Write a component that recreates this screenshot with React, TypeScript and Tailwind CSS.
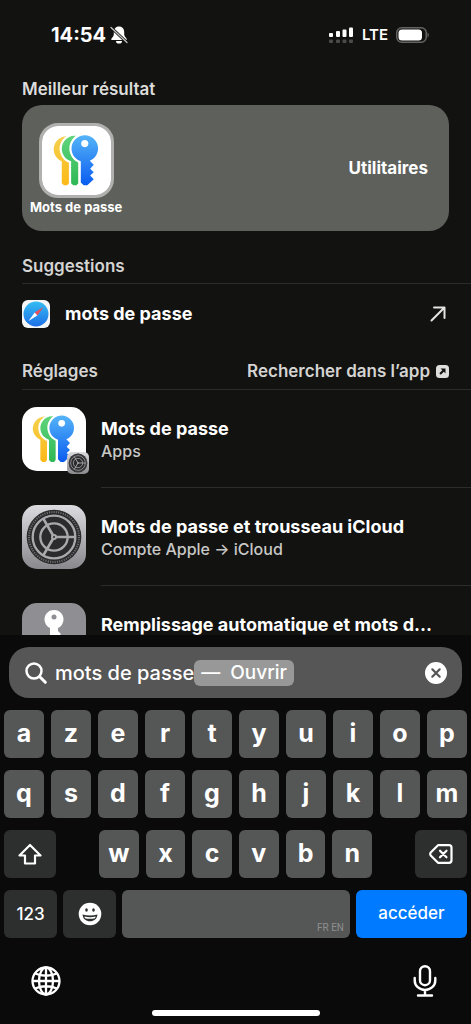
import { useId, useState } from "react";
import type { ReactNode } from "react";

const ROW_ONE = ["a", "z", "e", "r", "t", "y", "u", "i", "o", "p"];
const ROW_TWO = ["q", "s", "d", "f", "g", "h", "j", "k", "l", "m"];
const ROW_THREE = ["w", "x", "c", "v", "b", "n"];

function PasswordsIcon({ className }: { className: string }) {
  const id = useId();
  return (
    <svg viewBox="0 0 192 192" className={className} aria-hidden="true">
      <defs>
        <linearGradient id={`${id}y`} x1="0" y1="0" x2="0" y2="1">
          <stop offset="0" stopColor="#f5d04e" />
          <stop offset="1" stopColor="#fbb917" />
        </linearGradient>
        <linearGradient id={`${id}g`} x1="0" y1="0" x2="0" y2="1">
          <stop offset="0" stopColor="#5fd47c" />
          <stop offset="1" stopColor="#2fb855" />
        </linearGradient>
        <linearGradient id={`${id}b`} x1="0" y1="0" x2="0" y2="1">
          <stop offset="0" stopColor="#55b4f8" />
          <stop offset="1" stopColor="#0a5cf0" />
        </linearGradient>
      </defs>
      <rect width="192" height="192" fill="#fff" />
      <path
        d="M55 98A36 36 0 1 1 75 100V159L70 165H61L55 159Z"
        fill={`url(#${id}y)`}
      />
      <path
        d="M81 98A36 36 0 1 1 101 98V159L96 165H87L81 159Z"
        fill={`url(#${id}g)`}
        stroke="#fff"
        strokeWidth="12"
        paintOrder="stroke"
      />
      <path
        d="M108 98A37 37 0 1 1 133 97L144 108L134 119L144 129L134 138L144 148L126 165H116L108 157Z"
        fill={`url(#${id}b)`}
        stroke="#fff"
        strokeWidth="12"
        paintOrder="stroke"
      />
      <circle cx="119" cy="49" r="10" fill="#fff" />
    </svg>
  );
}

function SettingsIcon({ className }: { className: string }) {
  const id = useId();
  return (
    <svg viewBox="0 0 192 192" className={className} aria-hidden="true">
      <defs>
        <linearGradient id={id} x1="0" y1="0" x2="0" y2="1">
          <stop offset="0" stopColor="#dcdce0" />
          <stop offset="1" stopColor="#89898d" />
        </linearGradient>
      </defs>
      <rect width="192" height="192" fill={`url(#${id})`} />
      <circle cx="96" cy="96" r="82" fill="#2b2b2d" />
      <circle cx="96" cy="96" r="75" fill="none" stroke="#77777a" strokeWidth="6" strokeDasharray="3 4" />
      <g fill="none" stroke="#a9a9ad">
        <circle cx="96" cy="96" r="64" strokeWidth="7" />
        <circle cx="96" cy="96" r="41" strokeWidth="7" />
        <path d="M96 96H160M96 96L64 41M96 96L64 151" strokeWidth="8" />
      </g>
      <circle cx="96" cy="96" r="9" fill="#a9a9ad" />
      <circle cx="96" cy="96" r="3" fill="#2b2b2d" />
    </svg>
  );
}

function AutofillIcon({ className }: { className: string }) {
  return (
    <svg viewBox="0 0 64 64" className={className} aria-hidden="true">
      <rect width="64" height="64" fill="#8e8e93" />
      <path d="M28 25A9.500 9.500 0 1 1 36 25V28L39 31L35 35L39 39L32 46L28 42Z" fill="#fff" />
      <circle cx="32" cy="14" r="2.500" fill="#8e8e93" />
    </svg>
  );
}

function SafariIcon() {
  const id = useId();
  return (
    <svg viewBox="0 0 28 28" className="size-7 shrink-0 rounded-md" aria-hidden="true">
      <defs>
        <linearGradient id={id} x1="0" y1="0" x2="0" y2="1">
          <stop offset="0" stopColor="#35bdf3" />
          <stop offset="1" stopColor="#1d6fe6" />
        </linearGradient>
      </defs>
      <rect width="28" height="28" fill="#f4f6f8" />
      <circle cx="14" cy="14" r="12.500" fill={`url(#${id})`} />
      <path d="M21.500 7L15.300 15.500L12.700 12.500Z" fill="#e8505b" />
      <path d="M6.500 21L12.700 12.500L15.300 15.500Z" fill="#fff" />
    </svg>
  );
}

function StatusBar() {
  return (
    <header className="flex h-[70px] shrink-0 items-center justify-between pl-[51px] pr-[41px] text-white">
      <div className="flex items-center gap-1">
        <span className="text-xl leading-6 font-bold">14:54</span>
        <svg viewBox="0 0 18 18" className="size-[18px]" aria-label="Silencieux">
          <path
            d="M9 0.500C5.500 0.500 3.800 3 3.800 6V8.500C3.800 10.500 1.300 12 1.300 13.200V14H16.700V13.200C16.700 12 14.200 10.500 14.200 8.500V6C14.200 3 12.500 0.500 9 0.500ZM6 15A3 2.600 0 0 0 12 15Z"
            fill="#fff"
          />
          <path d="M1 1.500L17 16.500" stroke="#121210" strokeWidth="3" />
          <path d="M1 1.500L17 16.500" stroke="#c4c4c4" strokeWidth="1.300" strokeLinecap="round" />
        </svg>
      </div>
      <div className="flex items-center gap-2">
        <svg viewBox="0 0 25 17" className="h-[17px] w-[25px]" aria-label="Réseau">
          <g fill="#fff">
            <rect x="0" y="6" width="4" height="4" rx="1" />
            <rect x="7" y="4" width="4" height="6" rx="1" />
            <rect x="13.500" y="2.500" width="4" height="7.500" rx="1" />
            <rect x="20" y="0.500" width="4" height="9.500" rx="1" />
          </g>
          <g fill="#4b4b4a">
            <rect x="0" y="12.500" width="4" height="3.500" rx="1" />
            <rect x="7" y="12.500" width="4" height="3.500" rx="1" />
            <rect x="13.500" y="12.500" width="4" height="3.500" rx="1" />
            <rect x="20" y="12.500" width="4" height="3.500" rx="1" />
          </g>
        </svg>
        <span className="text-[15px] leading-6 font-semibold">LTE</span>
        <svg viewBox="0 0 34 16" className="h-4 w-[34px]" aria-label="Batterie">
          <rect x="0.750" y="0.750" width="29.500" height="14.500" rx="5" fill="none" stroke="#646463" strokeWidth="1.500" />
          <rect x="2.500" y="2.500" width="23.500" height="11" rx="3.500" fill="#fff" />
          <path d="M31.500 5.500A3 3 0 0 1 31.500 10.500Z" fill="#646463" />
        </svg>
      </div>
    </header>
  );
}

type ResultRowProps = {
  icon: ReactNode;
  title: string;
  subtitle?: string;
};

function ResultRow({ icon, title, subtitle }: ResultRowProps) {
  return (
    <li className="flex gap-[15px]">
      <div className="relative mt-[17px] size-16 shrink-0">{icon}</div>
      <div className="h-[98px] min-w-0 flex-1 border-b border-[#2c2c2a] pt-[27px] pr-8">
        <p className="truncate text-lg leading-6 font-bold text-white">{title}</p>
        {subtitle && (
          <p className="truncate text-base leading-5 font-medium text-[#c8c8c6]">{subtitle}</p>
        )}
      </div>
    </li>
  );
}

function LetterKey({ letter }: { letter: string }) {
  return (
    <button
      type="button"
      className="flex h-12 min-w-0 flex-1 items-center justify-center rounded-md bg-[#555656] pb-[2px] text-[25px] leading-8 font-bold text-white"
    >
      {letter}
    </button>
  );
}

function Keyboard() {
  return (
    <div className="flex flex-col gap-3 px-1 pt-3">
      <div className="flex gap-[7px]">
        {ROW_ONE.map((letter) => (
          <LetterKey key={letter} letter={letter} />
        ))}
      </div>
      <div className="flex gap-[7px]">
        {ROW_TWO.map((letter) => (
          <LetterKey key={letter} letter={letter} />
        ))}
      </div>
      <div className="flex">
        <button
          type="button"
          aria-label="Majuscule"
          className="flex h-12 w-[52px] items-center justify-center rounded-md bg-[#2d2e2e]"
        >
          <svg viewBox="0 0 24 22" className="h-[22px] w-6" fill="none" stroke="#fff" strokeWidth="2.200" strokeLinejoin="round">
            <path d="M12 2L22.500 12.500H17V20.500H7V12.500H1.500Z" />
          </svg>
        </button>
        <div className="mx-[43px] flex flex-1 gap-[7px]">
          {ROW_THREE.map((letter) => (
            <LetterKey key={letter} letter={letter} />
          ))}
        </div>
        <button
          type="button"
          aria-label="Effacer"
          className="flex h-12 w-[52px] items-center justify-center rounded-md bg-[#2d2e2e]"
        >
          <svg viewBox="0 0 24 20" className="h-5 w-6" fill="none" stroke="#fff" strokeWidth="2.200" strokeLinejoin="round" strokeLinecap="round">
            <path d="M9 1.200H20A2.500 2.500 0 0 1 22.500 3.700V16.300A2.500 2.500 0 0 1 20 18.800H9L1.700 11.500Q0.700 10 1.700 8.500Z" />
            <path d="M11 6.700L17.500 13.300M17.500 6.700L11 13.300" />
          </svg>
        </button>
      </div>
      <div className="flex gap-[6px]">
        <button
          type="button"
          className="h-12 w-[53px] rounded-md bg-[#2d2e2e] text-[17px] leading-6 font-medium text-white"
        >
          123
        </button>
        <button
          type="button"
          aria-label="Emoji"
          className="flex h-12 w-[53px] items-center justify-center rounded-md bg-[#2d2e2e]"
        >
          <svg viewBox="0 0 24 24" className="size-6">
            <circle cx="12" cy="12" r="11.300" fill="#fff" />
            <ellipse cx="8.500" cy="8" rx="1.300" ry="1.800" fill="#2d2e2e" />
            <ellipse cx="15.500" cy="8" rx="1.300" ry="1.800" fill="#2d2e2e" />
            <path d="M4.500 12.500Q12 14.500 19.500 12.500C19 17 16 19.300 12 19.300S5 17 4.500 12.500Z" fill="#2d2e2e" />
            <path d="M6.300 14.500Q12 15.800 17.700 14.500L17 16.200Q12 17.300 7 16.200Z" fill="#fff" />
          </svg>
        </button>
        <button
          type="button"
          aria-label="Espace"
          className="flex h-12 flex-1 items-end justify-end rounded-md bg-[#555656] px-[6px] pb-[3px] font-['Roboto',sans-serif] text-[10px] leading-[14px] text-[#8f8f8f]"
        >
          FR EN
        </button>
        <button
          type="button"
          className="h-12 w-[111px] rounded-md bg-[#007aff] pb-[2px] text-[17px] leading-6 font-medium text-white"
        >
          accéder
        </button>
      </div>
    </div>
  );
}

export default function App() {
  const [query, setQuery] = useState("mots de passe");

  return (
    <div className="flex h-screen flex-col overflow-hidden bg-[#121210] font-['Inter',sans-serif]">
      <StatusBar />

      <main className="min-h-0 flex-1 overflow-hidden pl-[22px]">
        <section className="pr-[22px]">
          <h2 className="pt-2 text-[17px] leading-[22px] font-semibold text-[#dcdcda]">Meilleur résultat</h2>
          <div className="mt-[5px] flex items-center justify-between rounded-[20px] bg-[#5e605c] py-[15px] pr-[21px] pl-2">
            <a href="#mots-de-passe" className="flex flex-col items-center pt-[3px] text-[13px] leading-[18px] font-bold text-white">
              <PasswordsIcon className="size-[75px] rounded-[19px] border-[3px] border-[#b0b1af]" />
              Mots de passe
            </a>
            <span className="text-[17px] leading-6 font-bold text-white">Utilitaires</span>
          </div>
        </section>

        <section>
          <h2 className="border-b border-[#2c2c2a] pt-6 pb-[6px] text-[17px] leading-[22px] font-semibold text-[#d4d4d2]">
            Suggestions
          </h2>
          <a href="#suggestion" className="flex h-[60px] items-center gap-[15px] pr-[25px]">
            <SafariIcon />
            <span className="flex-1 text-lg leading-6 font-bold text-white">mots de passe</span>
            <svg viewBox="0 0 16 16" className="size-4" fill="none" stroke="#e4e4e2" strokeWidth="2" strokeLinecap="round" strokeLinejoin="round">
              <path d="M1.500 14.500L14.500 1.500M4 1.500H14.500V12" />
            </svg>
          </a>
        </section>

        <section>
          <div className="flex items-center justify-between border-b border-[#2c2c2a] pt-4 pr-[22px] pb-[7px] text-[17px] leading-[22px] font-semibold text-[#d4d4d2]">
            <h2>Réglages</h2>
            <a href="#reglages" className="flex items-center gap-[6px]">
              Rechercher dans l’app
              <svg viewBox="0 0 13 13" className="size-[13px]" aria-hidden="true">
                <rect width="13" height="13" rx="3.500" fill="#dededc" />
                <path d="M4.500 3.500H9.500V8.500L7.800 6.800L4.800 9.800L3.300 8.300L6.300 5.300Z" fill="#121210" />
              </svg>
            </a>
          </div>
          <ul>
            <ResultRow
              icon={
                <>
                  <PasswordsIcon className="size-16 rounded-[15px]" />
                  <SettingsIcon className="absolute -right-[3px] -bottom-[3px] size-[22px] rounded-[5px]" />
                </>
              }
              title="Mots de passe"
              subtitle="Apps"
            />
            <ResultRow
              icon={<SettingsIcon className="size-16 rounded-[15px]" />}
              title="Mots de passe et trousseau iCloud"
              subtitle="Compte Apple → iCloud"
            />
            <ResultRow
              icon={<AutofillIcon className="size-16 rounded-[15px]" />}
              title="Remplissage automatique et mots de passe"
            />
          </ul>
        </section>
      </main>

      <footer className="shrink-0 bg-[#0a0a0a] pt-3">
        <div className="mx-[9px] flex h-[51px] items-center rounded-[20px] bg-[#565656] pr-[14px] pl-4">
          <svg viewBox="0 0 22 22" className="mr-2 size-[22px] shrink-0" fill="none" stroke="#fff" strokeWidth="2.500" strokeLinecap="round">
            <circle cx="9" cy="9" r="7.500" />
            <path d="M14.500 14.500L20.300 20.300" strokeWidth="3" />
          </svg>
          <input
            type="text"
            aria-label="Rechercher"
            value={query}
            onChange={(event) => setQuery(event.target.value)}
            className="field-sizing-content bg-transparent text-xl leading-[26px] font-medium text-white outline-none"
          />
          <span className="flex gap-[10px] rounded-md bg-[#989898] px-[7px] text-[19px] leading-[26px] font-medium text-white">
            <span>—</span>
            <span>Ouvrir</span>
          </span>
          <button type="button" aria-label="Effacer la recherche" onClick={() => setQuery("")} className="ml-auto">
            <svg viewBox="0 0 24 24" className="size-6">
              <circle cx="12" cy="12" r="11" fill="#fff" />
              <path d="M8.300 8.300L15.700 15.700M15.700 8.300L8.300 15.700" stroke="#565656" strokeWidth="2.200" strokeLinecap="round" />
            </svg>
          </button>
        </div>

        <Keyboard />

        <div className="flex items-center justify-between pt-[27px] pr-[34px] pl-[31px]">
          <button type="button" aria-label="Changer de clavier">
            <svg viewBox="0 0 30 30" className="size-[30px]" fill="none" stroke="#fff" strokeWidth="2.300">
              <circle cx="15" cy="15" r="13.500" />
              <ellipse cx="15" cy="15" rx="7" ry="13.500" />
              <path d="M15 1.300V28.700M1.300 15H28.700M4 7.500Q15 12 26 7.500M4 22.500Q15 18 26 22.500" />
            </svg>
          </button>
          <button type="button" aria-label="Dictée">
            <svg viewBox="0 0 24 32" className="h-8 w-6" fill="none" stroke="#fff" strokeWidth="2.400" strokeLinecap="round">
              <rect x="7" y="1.200" width="10" height="19" rx="5" />
              <path d="M1.700 13V15.500A10.300 9.500 0 0 0 22.300 15.500V13M12 25V30.500M5 30.500H19" />
            </svg>
          </button>
        </div>
        <div className="mx-auto mt-[13px] mb-2 h-[6px] w-[168px] rounded-full bg-white" />
      </footer>
    </div>
  );
}
